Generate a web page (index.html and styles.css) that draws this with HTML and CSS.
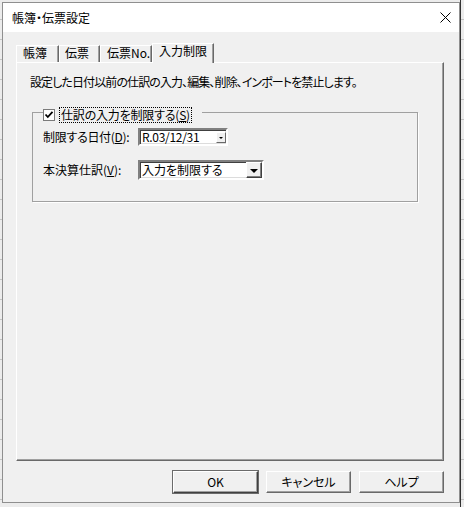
FILE: index.html
```html
<!DOCTYPE html>
<html lang="ja">
<head>
<meta charset="utf-8">
<title>帳簿・伝票設定</title>
<link rel="stylesheet" href="styles.css">
</head>
<body>
<div class="window">
  <div class="titlebar">
    <span class="title">帳簿・伝票設定</span>
    <span class="close"><svg width="11" height="11" viewBox="0 0 11 11"><path d="M0.5 0.5 L10.5 10.5 M10.5 0.5 L0.5 10.5" stroke="#000" stroke-width="1" fill="none"/></svg></span>
  </div>
  <div class="client">
    <div class="tabs">
      <div class="tab tab-1">帳簿</div>
      <div class="tab tab-2">伝票</div>
      <div class="tab tab-3">伝票No.</div>
      <div class="tab tab-active">入力制限</div>
    </div>
    <div class="panel">
      <p class="desc">設定した日付以前の仕訳の入力、編集、削除、インポートを禁止します。</p>
      <fieldset class="group">
        <legend class="legend">
          <span class="check"><svg width="10" height="10" viewBox="0 0 10 10"><path d="M1.5 4.5 L3.8 7 L8.5 1.8" stroke="#000" stroke-width="1.8" fill="none"/></svg></span>
          <span class="focus">仕訳の入力を制限する(<u>S</u>)</span>
        </legend>
        <div class="row row-date">
          <span class="lbl lbl-tight">制限する日付(<u>D</u>):</span>
          <div class="datebox"><span class="dtext">R.03/12/31</span><span class="spin"><span class="tri-small"></span></span></div>
        </div>
        <div class="row row-combo">
          <span class="lbl">本決算仕訳(<u>V</u>):</span>
          <div class="combo"><span class="ctext">入力を制限する</span><span class="dropbtn"><span class="tri"></span></span></div>
        </div>
      </fieldset>
    </div>
    <div class="buttons">
      <div class="btn btn-default">OK</div>
      <div class="btn">キャンセル</div>
      <div class="btn">ヘルプ</div>
    </div>
  </div>
</div>
</body>
</html>
```
FILE: styles.css
```css
html, body {
  margin: 0;
  padding: 0;
}
body {
  width: 464px;
  height: 507px;
  overflow: hidden;
  font-family: "Noto Sans CJK JP", "Noto Sans", sans-serif;
  font-size: 12px;
  line-height: 14px;
  color: #000;
  font-feature-settings: "palt";
  background:
    linear-gradient(to right, transparent 460px, #333 460px, #333 461px, transparent 461px),
    repeating-linear-gradient(to bottom, transparent 0, transparent 19px, #c4c4c4 19px, #c4c4c4 20px),
    #ececec;
}
.window {
  margin: 2px 0 0 2px;
  width: 456px;
  height: 499px;
  border: 1px solid #8f8f8f;
  display: flex;
  flex-direction: column;
  background: #f0f0f0;
}
.titlebar {
  height: 29px;
  flex: none;
  background: #fff;
  display: flex;
  align-items: center;
  justify-content: space-between;
  padding: 0 8px 0 9px;
}
.title {
  font-size: 12px;
  line-height: 14px;
}
.close {
  display: flex;
  width: 11px;
  height: 11px;
}
.client {
  flex: 1;
  padding: 11px 0 0 13px;
}
.tabs {
  display: flex;
  align-items: flex-end;
  height: 19px;
}
.tab {
  box-sizing: border-box;
  height: 17px;
  padding-left: 6px;
  border-top: 1px solid #fff;
  border-left: 1px solid #fff;
  border-right: 1px solid #696969;
  box-shadow: inset -1px 0 0 #a0a0a0;
  white-space: nowrap;
  background: #f0f0f0;
}
.tab-1 { width: 43px; }
.tab-2 { width: 41px; padding-left: 5px; }
.tab-3 { width: 52px; }
.tab-active {
  width: 62px;
  height: 20px;
  margin-bottom: -1px;
  position: relative;
  z-index: 1;
}
.panel {
  box-sizing: border-box;
  width: 428px;
  height: 399px;
  border: 1px solid;
  border-color: #fff #696969 #696969 #fff;
  box-shadow: inset -1px -1px 0 #a0a0a0;
  padding: 12px 0 0 13px;
}
.desc {
  margin: 0;
  white-space: nowrap;
  letter-spacing: -0.9px;
}
.group {
  margin: 18px 0 0 2px;
  box-sizing: border-box;
  width: 386px;
  padding: 11px 10px 21px 10px;
  border: 1px solid #a0a0a0;
  box-shadow: 1px 1px 0 #fff;
  min-width: 0;
}
.legend {
  height: 10px;
  padding: 0 10px 0 0;
  display: flex;
  align-items: flex-start;
}
.check {
  box-sizing: border-box;
  width: 12px;
  height: 12px;
  margin-top: 2px;
  border: 1px solid #7b7b7b;
  background: #fff;
  display: flex;
  align-items: center;
  justify-content: center;
  flex: none;
}
.focus {
  margin-left: 4px;
  padding: 0 1px;
  border: 1px dotted #000;
  white-space: nowrap;
  flex: none;
  letter-spacing: -0.2px;
}
.row {
  display: flex;
  align-items: center;
}
.row-combo {
  margin-top: 14px;
}
.lbl {
  width: 95px;
  flex: none;
  white-space: nowrap;
}
.lbl-tight {
  letter-spacing: -0.3px;
}
.datebox, .combo {
  box-sizing: border-box;
  border: 2px solid;
  border-color: #808080 #fff #fff #808080;
  box-shadow: inset 1px 1px 0 #404040, inset -1px -1px 0 #dcdcdc;
  background: #fff;
  display: flex;
}
.datebox {
  width: 90px;
  height: 18px;
  align-items: flex-end;
  justify-content: space-between;
}
.dtext {
  padding-left: 2px;
  align-self: center;
  letter-spacing: -0.3px;
  font-feature-settings: normal;
}
.spin {
  box-sizing: border-box;
  width: 10px;
  height: 11px;
  margin: 0 0 1px 0;
  border: 1px solid;
  border-color: #fff #696969 #696969 #fff;
  background: #f0f0f0;
  display: flex;
  align-items: center;
  justify-content: center;
}
.tri-small {
  width: 0;
  height: 0;
  border-left: 2px solid transparent;
  border-right: 2px solid transparent;
  border-top: 2px solid #000;
}
.combo {
  width: 126px;
  height: 20px;
  align-items: center;
  justify-content: space-between;
}
.ctext {
  padding-left: 2px;
}
.dropbtn {
  box-sizing: border-box;
  width: 16px;
  height: 16px;
  border: 1px solid;
  border-color: #fff #404040 #404040 #fff;
  box-shadow: inset -1px -1px 0 #808080;
  background: #f0f0f0;
  display: flex;
  align-items: center;
  justify-content: center;
}
.tri {
  width: 0;
  height: 0;
  border-left: 4px solid transparent;
  border-right: 4px solid transparent;
  border-top: 4px solid #000;
  margin-top: 1px;
}
.buttons {
  width: 428px;
  margin-top: 10px;
  display: flex;
  justify-content: flex-end;
  gap: 8px;
}
.btn {
  box-sizing: border-box;
  width: 85px;
  height: 22px;
  border: 1px solid;
  border-color: #fff #696969 #696969 #fff;
  box-shadow: inset -1px -1px 0 #a0a0a0;
  background: #f0f0f0;
  display: flex;
  align-items: center;
  justify-content: center;
  white-space: nowrap;
}
.btn-default {
  border-color: #fff #404040 #404040 #fff;
  outline: 1px solid #6b6b6b;
  outline-offset: 0;
}
```
